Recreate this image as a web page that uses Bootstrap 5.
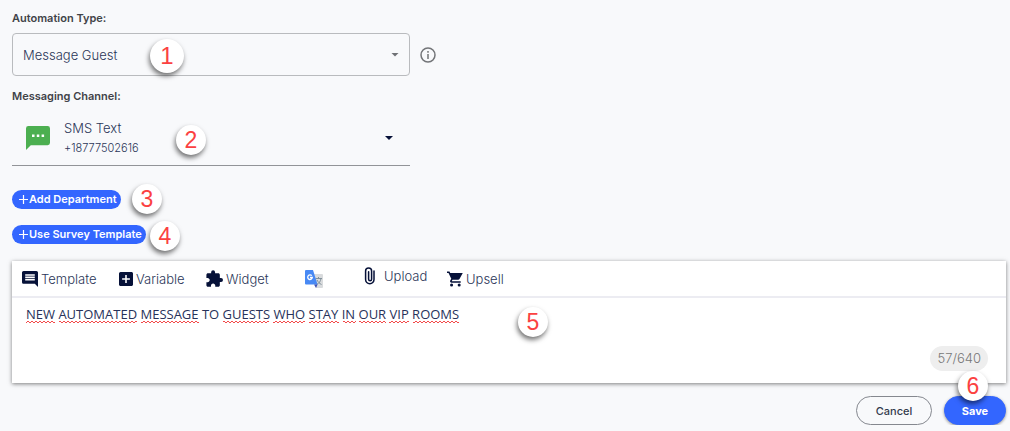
<!DOCTYPE html>
<html lang="en">
<head>
<meta charset="utf-8">
<meta name="viewport" content="width=device-width, initial-scale=1">
<title>Automation message</title>
<link href="https://cdn.jsdelivr.net/npm/bootstrap@5.3.0/dist/css/bootstrap.min.css" rel="stylesheet">
<style>
  body { background: #f8f9fb; color: #2b3658; font-family: Inter, "Open Sans", sans-serif; font-size: 13px; font-weight: 300; line-height: 20px; }
  .page { padding: 8px 4px 0 12px; }
  .field { max-width: 398px; }
  .field-label { display: block; font-size: 11px; font-weight: 600; line-height: 20px; color: #414348; }
  .type-row { margin: 5px 0 10px; gap: 10px; }
  .type-select { height: 43px; width: 100%; appearance: none; border: 1px solid #b9bbbe; border-radius: 4px; background: transparent; color: #2b3658; padding: 0 10px; font-weight: 300; }
  .caret { position: absolute; right: 11px; top: 50%; width: 8px; height: 4px; margin-top: -2px; background: #6f7175; clip-path: polygon(0 0, 100% 0, 50% 100%); pointer-events: none; }
  .channel { height: 60px; background: none; border: 0; border-bottom: 1px solid #929498; color: inherit; padding: 4px 14px 0; gap: 14px; text-align: left; font-weight: 300; }
  .channel .caret { right: 17px; margin-top: 0; background: #061138; }
  .channel-number { font-size: 11px; }
  .pill-btn { height: 19px; border: 0; border-radius: 10px; background: #3366ff; color: #fff; font-size: 11px; font-weight: 600; line-height: 19px; padding: 0 4px 0 7px; gap: 1px; }
  .step { position: absolute; z-index: 3; width: 30px; height: 30px; border-radius: 50%; background: #fff; color: #fb4141; font: 23px/30px "Liberation Sans", Arial, sans-serif; text-align: center; box-shadow: -1px 3px 5px rgba(0,0,0,.55); pointer-events: none; }
  .step-1 { left: 138px; top: 6px; width: 34px; height: 34px; line-height: 34px; font-size: 24px; }
  .step-2 { left: 164px; top: 19px; }
  .step-3 { left: 120px; top: -6px; }
  .step-4 { left: 138px; top: -4px; }
  .step-5 { left: 506px; top: 9px; }
  .step-6 { left: 50%; top: -25px; margin-left: -17px; }
  .editor { background: #fff; margin-top: 17px; box-shadow: 0 1px 4px rgba(0,0,0,.5); }
  .tools { display: grid; grid-template-columns: 97px 87px 99px 59px 83px auto; height: 37px; padding: 0 8px; border-bottom: 2px solid #ececf2; align-items: center; }
  .tool { background: none; border: 0; padding: 0 2px; color: #2b3658; display: flex; align-items: center; gap: 3px; text-align: left; font-weight: 300; }
  .tool svg { flex: none; fill: #061138; }
  .tool-raised { padding-bottom: 6px; gap: 7px; }
  .message { display: block; width: 100%; height: 85px; border: 0; resize: none; background: transparent; color: #27325a; padding: 6px 14px; outline: 0; font-family: "Open Sans", sans-serif; font-weight: 400; }
  .spelling { position: absolute; left: 14px; top: 22px; pointer-events: none; }
  .counter { position: absolute; right: 18px; bottom: 12px; height: 25px; border-radius: 13px; background: #eee; color: #777; padding: 0 7px; line-height: 24px; }
  .actions { gap: 12px; padding-top: 13px; }
  .action-btn { height: 29px; border-radius: 15px; font-size: 11px; font-weight: 500; background: transparent; border: 1px solid #85888f; color: #333b4d; width: 76px; padding: 0; }
  .action-save { width: 62px; border-color: #3366ff; background: #3366ff; color: #fff; font-weight: 700; box-shadow: 0 1px 3px rgba(0,0,0,.4); }
</style>
</head>
<body>
<main class="page">
  <label class="field-label" for="type">Automation Type:</label>
  <div class="type-row d-flex align-items-center">
    <div class="field position-relative flex-grow-1">
      <select class="type-select" id="type"><option>Message Guest</option></select>
      <span class="caret"></span>
      <span class="step step-1">1</span>
    </div>
    <svg width="16" height="16" viewBox="0 0 16 16" fill="none" stroke="#737578" stroke-width="1.5" role="img" aria-label="Information"><circle cx="8" cy="8" r="7"/><path d="M8 7v5M8 4v1.7"/></svg>
  </div>

  <label class="field-label" for="channel">Messaging Channel:</label>
  <div class="field position-relative">
    <button class="channel d-flex align-items-center w-100" id="channel" type="button">
      <svg width="24" height="24" viewBox="0 0 24 24"><path fill="#4caf50" d="M2.400 0h19.200A2.400 2.400 0 0 1 24 2.400v14.400a2.400 2.400 0 0 1-2.400 2.400H4.800L0 24V2.400A2.400 2.400 0 0 1 2.400 0z"/><path fill="#fff" d="M6 8.500h2.500V11H6zm4.800 0h2.500V11h-2.500zm4.800 0h2.500V11h-2.500z"/></svg>
      <span><span class="d-block">SMS Text</span><span class="channel-number d-block">+18777502616</span></span>
      <span class="caret"></span>
    </button>
    <span class="step step-2">2</span>
  </div>

  <div class="d-flex mt-4">
    <div class="position-relative">
      <button class="pill-btn d-flex align-items-center" type="button"><svg width="9" height="9" viewBox="0 0 9 9" stroke="#fff" stroke-width="1.2"><path d="M4.500 0v9M0 4.500h9"/></svg>Add Department</button>
      <span class="step step-3">3</span>
    </div>
  </div>
  <div class="d-flex mt-3">
    <div class="position-relative">
      <button class="pill-btn d-flex align-items-center" type="button"><svg width="9" height="9" viewBox="0 0 9 9" stroke="#fff" stroke-width="1.2"><path d="M4.500 0v9M0 4.500h9"/></svg>Use Survey Template</button>
      <span class="step step-4">4</span>
    </div>
  </div>

  <section class="editor">
    <div class="tools">
      <button class="tool" type="button"><svg width="16" height="16" viewBox="2 2 20 20"><path d="M21.990 4c0-1.100-.890-2-1.990-2H4c-1.100 0-2 .900-2 2v12c0 1.100.900 2 2 2h14l4 4-.010-18zM18 14H6v-2h12v2zm0-3H6V9h12v2zm0-3H6V6h12v2z"/></svg>Template</button>
      <button class="tool" type="button"><svg width="14" height="14" viewBox="3 3 18 18"><path d="M19 3H5a2 2 0 0 0-2 2v14c0 1.100.900 2 2 2h14c1.100 0 2-.900 2-2V5c0-1.100-.900-2-2-2zm-2 10h-4v4h-2v-4H7v-2h4V7h2v4h4v2z"/></svg>Variable</button>
      <button class="tool" type="button"><svg width="17" height="17" viewBox="1.500 1 21.500 21"><path d="M20.500 11H19V7c0-1.100-.900-2-2-2h-4V3.500a2.500 2.500 0 0 0-5 0V5H4c-1.100 0-1.990.900-1.990 2v3.800H3.500c1.490 0 2.700 1.210 2.700 2.700s-1.210 2.700-2.700 2.700H2V20c0 1.100.900 2 2 2h3.800v-1.500c0-1.490 1.210-2.700 2.700-2.700s2.700 1.210 2.700 2.700V22H17c1.100 0 2-.900 2-2v-4h1.500a2.500 2.500 0 0 0 0-5z"/></svg>Widget</button>
      <button class="tool" type="button" aria-label="Translate"><svg width="18" height="18" viewBox="0 0 18 18"><path fill="#d9dbdd" d="M7 4h10a1 1 0 0 1 1 1v12a1 1 0 0 1-1 1h-6z"/><path fill="none" stroke="#81909a" d="M10.500 8.500h6.500M13.500 7v1.500M16 8.500c-.5 3-2 5-4.500 6M12 10c1 2 2.500 3.500 4.500 4.500"/><path fill="#4889f4" d="M1 0h7l4.500 14.500H1a1 1 0 0 1-1-1V1a1 1 0 0 1 1-1z"/><path fill="#3f51b5" d="M9 14.500h3.500L11 18z"/><path fill="none" stroke="#fff" stroke-width="1.300" d="M6.800 5.700A2.300 2.300 0 1 0 7.300 7.500H5"/></svg></button>
      <button class="tool tool-raised" type="button"><svg width="13" height="18" viewBox="1 0 13 18"><path fill="none" stroke="#061138" stroke-width="1.500" stroke-linecap="round" d="M11 4v8.500a4.200 4.200 0 0 1-8.400 0V4a3 3 0 0 1 6 0v8.300a1.500 1.500 0 0 1-3 0V4.800"/></svg>Upload</button>
      <button class="tool" type="button"><svg width="16" height="16" viewBox="1 2 21 20"><path d="M7 18a2 2 0 1 0 0 4 2 2 0 0 0 0-4zM1 2v2h2l3.600 7.590-1.350 2.450C4.520 15.370 5.480 17 7 17h12v-2H7.420l-.120-.370.900-1.630h7.450c.750 0 1.410-.410 1.750-1.030L21.700 4H5.210l-.940-2H1z"/><circle cx="17" cy="20" r="2"/></svg>Upsell</button>
    </div>
    <div class="position-relative">
      <textarea class="message" aria-label="Message" spellcheck="false">NEW AUTOMATED MESSAGE TO GUESTS WHO STAY IN OUR VIP ROOMS</textarea>
      <svg class="spelling" width="450" height="4" aria-hidden="true">
        <defs><pattern id="wave" width="4" height="4" patternUnits="userSpaceOnUse"><path d="M0 3l2-2 2 2" fill="none" stroke="#f24b4b"/></pattern></defs>
        <path fill="url(#wave)" d="M0 0h29v4H0zM33 0h78v4H33zM115 0h58v4h-58zM197 0h46v4h-46zM247 0h32v4h-32zM283 0h30v4h-30zM317 0h13v4h-13zM333 0h27v4h-27zM363 0h20v4h-20zM387 0h46v4h-46z"/>
      </svg>
      <span class="step step-5">5</span>
      <span class="counter">57/640</span>
    </div>
  </section>

  <div class="actions d-flex justify-content-end">
    <button class="action-btn" type="button">Cancel</button>
    <div class="position-relative">
      <button class="action-btn action-save" type="button">Save</button>
      <span class="step step-6">6</span>
    </div>
  </div>
</main>
<script src="https://cdn.jsdelivr.net/npm/bootstrap@5.3.0/dist/js/bootstrap.bundle.min.js"></script>
</body>
</html>
